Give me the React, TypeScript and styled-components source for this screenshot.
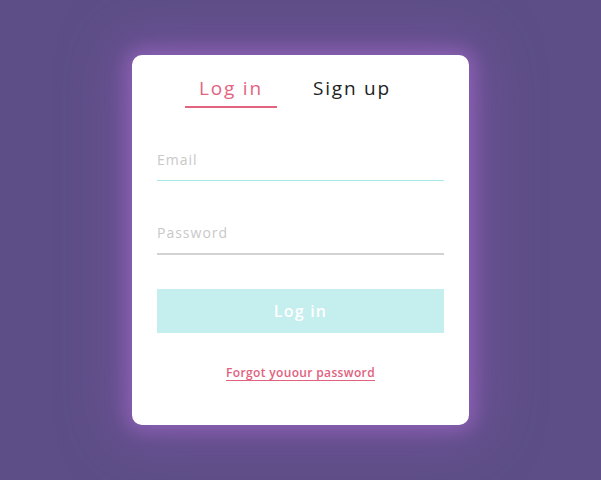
import React, { useState } from 'react';
import styled, { createGlobalStyle } from 'styled-components';

const GlobalStyle = createGlobalStyle`
  * {
    box-sizing: border-box;
  }

  html, body {
    margin: 0;
    height: 100%;
  }

  body {
    background: #5d4e87;
    font-family: 'Open Sans', 'Noto Sans', sans-serif;
  }

  #root {
    height: 100%;
  }
`;

const Page = styled.div`
  height: 100%;
  display: flex;
  align-items: center;
  justify-content: center;
`;

const Card = styled.div`
  width: 337px;
  height: 370px;
  background: #ffffff;
  border-radius: 10px;
  padding: 19px 25px 0;
  display: flex;
  flex-direction: column;
  box-shadow: 0 0 18px 6px rgba(140, 96, 180, 0.95), 0 0 55px 14px rgba(128, 88, 165, 0.65);
`;

const Tabs = styled.div`
  display: flex;
  gap: 29px;
  padding-left: 28px;
`;

const Tab = styled.button<{ $active?: boolean }>`
  width: 92px;
  padding: 0 0 4px;
  border: none;
  border-bottom: 2px solid ${p => (p.$active ? '#e3647f' : 'transparent')};
  background: none;
  font-family: inherit;
  font-size: 19px;
  line-height: 28px;
  letter-spacing: 1.8px;
  color: ${p => (p.$active ? '#e3647f' : '#222222')};
  cursor: pointer;
`;

const Form = styled.form`
  display: flex;
  flex-direction: column;
  margin-top: 36px;
`;

// the email field sits in its teal resting state, the password one in grey
const Field = styled.input<{ $line: string; $weight: number }>`
  height: ${p => 36 + p.$weight}px;
  margin-bottom: 36px;
  padding: 0 0 5px;
  border: none;
  border-bottom: ${p => `${p.$weight}px solid ${p.$line}`};
  outline: none;
  background: transparent;
  font-family: inherit;
  font-size: 14px;
  letter-spacing: 1px;
  color: #444;

  &::placeholder {
    color: #c8c8c8;
  }
`;

const Submit = styled.button`
  height: 44px;
  margin-top: -2px;
  border: none;
  background: #c5eeee;
  color: #ffffff;
  font-family: inherit;
  font-size: 16px;
  font-weight: 600;
  letter-spacing: 1.2px;
  cursor: pointer;
`;

const Forgot = styled.a`
  align-self: center;
  margin-top: 32px;
  font-size: 12px;
  font-weight: 600;
  letter-spacing: 0.35px;
  color: #e0627e;
  text-decoration: none;
  border-bottom: 1.5px solid #e0627e;
  line-height: 15px;
  cursor: pointer;
`;

export default function App() {
  const [tab, setTab] = useState<'login' | 'signup'>('login');

  return (
    <>
      <GlobalStyle />
      <Page>
        <Card>
          <Tabs>
            <Tab $active={tab === 'login'} onClick={() => setTab('login')}>
              Log in
            </Tab>
            <Tab $active={tab === 'signup'} onClick={() => setTab('signup')}>
              Sign up
            </Tab>
          </Tabs>
          <Form onSubmit={e => e.preventDefault()}>
            <Field type="text" placeholder="Email" $line="#a6e8e8" $weight={1} />
            <Field type="password" placeholder="Password" $line="#d2d2d2" $weight={2} />
            <Submit type="submit">Log in</Submit>
            <Forgot>Forgot youour password</Forgot>
          </Form>
        </Card>
      </Page>
    </>
  );
}
